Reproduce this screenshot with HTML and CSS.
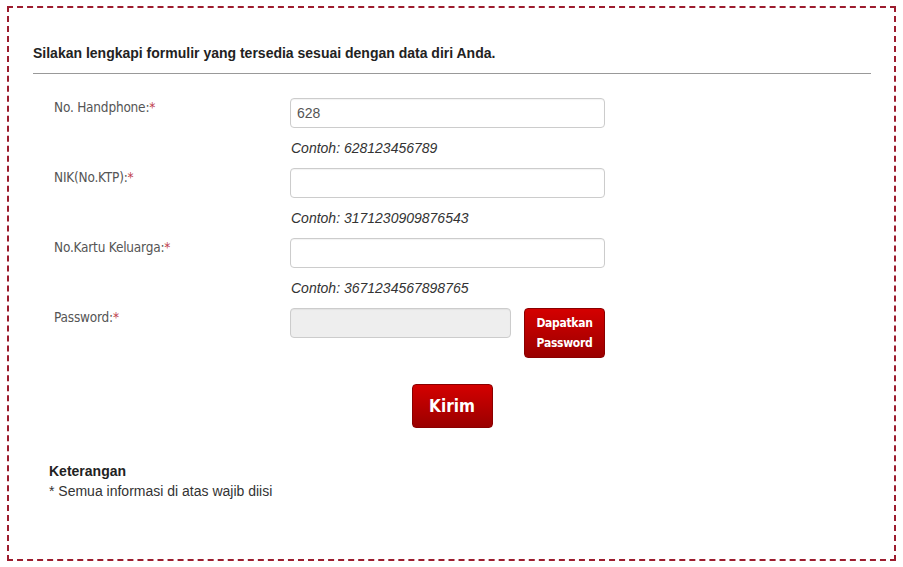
FILE: index.html
```html
<!DOCTYPE html>
<html lang="id">
    <head>
        <meta charset="UTF-8">
        <meta name="viewport" content="width=device-width, initial-scale=1.0">
        <title>Registrasi</title>
        <link rel="stylesheet" href="styles.css">
    </head>
    <body>
        <div class="frame">
            <h4 class="intro">Silakan lengkapi formulir yang tersedia sesuai dengan data diri Anda.</h4>

            <form class="reg-form">
                <div class="form-row">
                    <label for="phone">No. Handphone:<span class="req">*</span></label>
                    <div class="field">
                        <input type="text" id="phone" value="628">
                        <div class="hint">Contoh: 628123456789</div>
                    </div>
                </div>

                <div class="form-row">
                    <label for="nik">NIK(No.KTP):<span class="req">*</span></label>
                    <div class="field">
                        <input type="text" id="nik">
                        <div class="hint">Contoh: 3171230909876543</div>
                    </div>
                </div>

                <div class="form-row">
                    <label for="kk">No.Kartu Keluarga:<span class="req">*</span></label>
                    <div class="field">
                        <input type="text" id="kk">
                        <div class="hint">Contoh: 3671234567898765</div>
                    </div>
                </div>

                <div class="form-row">
                    <label for="pass">Password:<span class="req">*</span></label>
                    <div class="field field-inline">
                        <input type="text" id="pass" disabled>
                        <button type="button" class="btn-red btn-pass">Dapatkan<br>Password</button>
                    </div>
                </div>

                <div class="submit-row">
                    <button type="button" class="btn-red btn-send">Kirim</button>
                </div>
            </form>

            <div class="notes">
                <strong>Keterangan</strong>
                <div>* Semua informasi di atas wajib diisi</div>
            </div>
        </div>
    </body>
</html>
```

FILE: styles.css
```css
body {
    margin: 6px 7px;
    font-family: 'Liberation Sans', Arial, sans-serif;
    color: #333;
    background: #fff;
}

.frame {
    width: 889px;
    height: 555px;
    border: 2px dashed #9c1c2e;
    padding: 0 23px 0 24px;
    box-sizing: border-box;
}

.intro {
    margin: 37px 0 0 0;
    padding: 0 0 12px 0;
    font-size: 14px;
    font-weight: bold;
    color: #222;
    border-bottom: 1px solid #999;
}

.reg-form {
    padding: 24px 0 0 0;
}

.form-row {
    display: flex;
    height: 70px;
}

.form-row label {
    width: 236px;
    padding: 0 0 0 21px;
    font-family: 'DejaVu Sans Condensed', 'DejaVu Sans', sans-serif;
    font-size: 13.5px;
    letter-spacing: -0.2px;
    color: #555;
    line-height: 18px;
}

.req {
    color: #c0404c;
}

.field {
    width: 315px;
}

.field input {
    width: 315px;
    height: 30px;
    box-sizing: border-box;
    border: 1px solid #ccc;
    border-radius: 4px;
    padding: 0 6px;
    font-family: 'Liberation Sans', Arial, sans-serif;
    font-size: 14px;
    color: #555;
    box-shadow: inset 0 1px 1px rgba(0, 0, 0, 0.05);
}

.field input:disabled {
    background: #eee;
}

.hint {
    margin-top: 12px;
    padding-left: 1px;
    font-size: 14px;
    font-style: italic;
    color: #333;
}

.field-inline {
    display: flex;
    gap: 13px;
    align-items: flex-start;
}

.field-inline input {
    width: 221px;
}

.btn-red {
    border: 1px solid #8a0000;
    border-radius: 4px;
    background: linear-gradient(#d40000, #9a0000);
    color: #fff;
    font-weight: bold;
    cursor: pointer;
}

.btn-pass {
    width: 81px;
    height: 50px;
    padding: 0;
    font-family: 'DejaVu Sans Condensed', 'DejaVu Sans', sans-serif;
    font-size: 12px;
    letter-spacing: -0.3px;
    line-height: 20px;
}

.submit-row {
    display: flex;
    justify-content: center;
    padding: 6px 0 0 0;
}

.btn-send {
    width: 81px;
    height: 44px;
    font-family: 'DejaVu Sans Condensed', 'DejaVu Sans', sans-serif;
    font-size: 17px;
}

.notes {
    margin: 33px 0 0 16px;
    font-size: 14px;
    line-height: 20px;
    color: #333;
}

.notes strong {
    display: block;
    font-size: 14px;
    color: #222;
}
```
